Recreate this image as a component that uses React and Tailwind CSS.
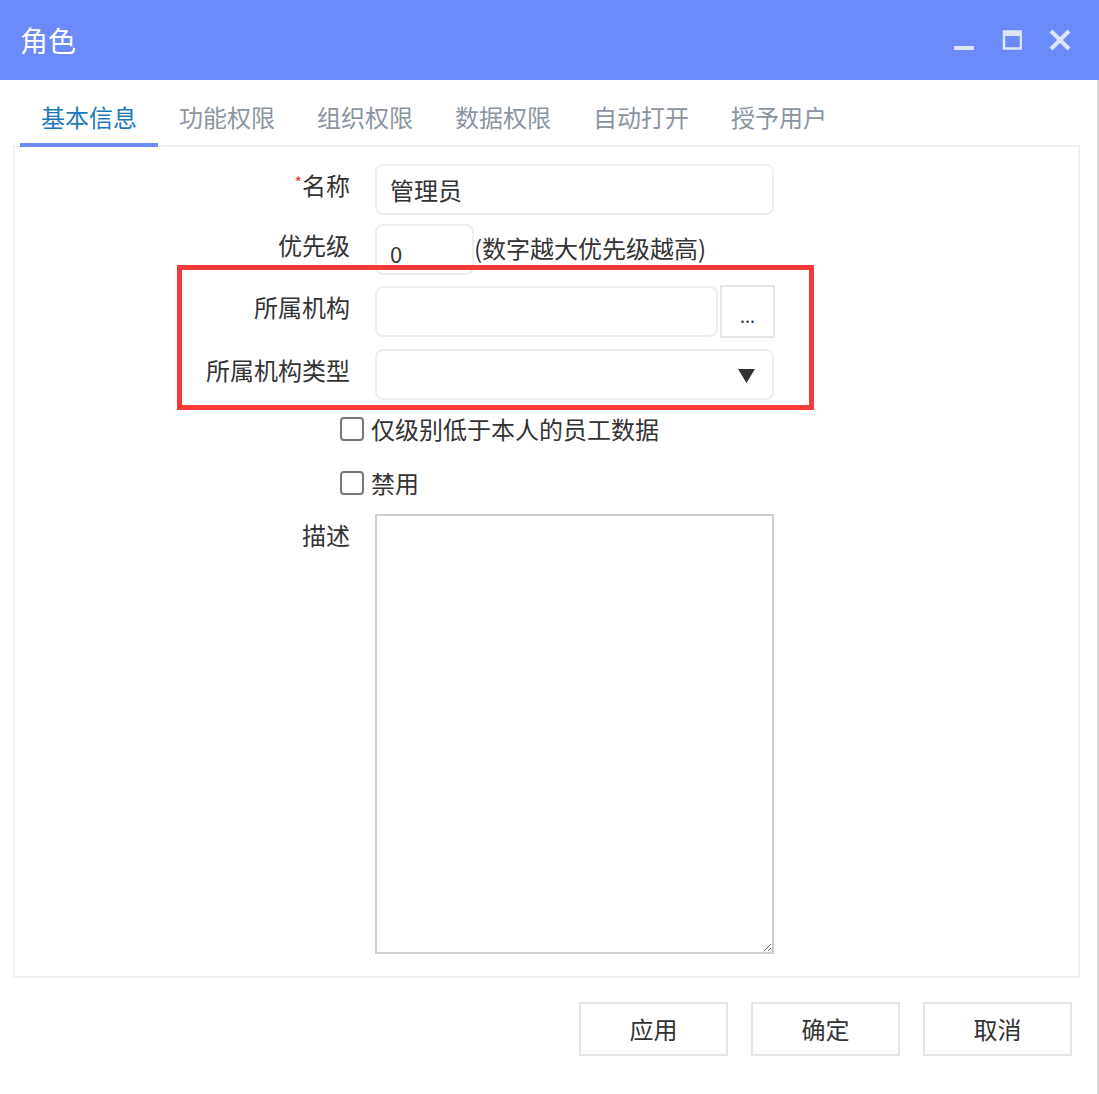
import { useState } from 'react'

const font = { fontFamily: '"Noto Sans CJK SC", "Noto Sans", sans-serif' }

const tabs = ['基本信息', '功能权限', '组织权限', '数据权限', '自动打开', '授予用户']

function Label({ children, required }) {
  return (
    <div className="w-[335px] shrink-0 pt-[5px] text-right text-[24px] leading-[32px] text-[#333]">
      {required && <span className="relative -top-[6px] text-[16px] text-[#e33]">*</span>}
      {children}
    </div>
  )
}

function Checkbox({ label }) {
  const [checked, setChecked] = useState(false)
  return (
    <label className="ml-[325px] flex items-center cursor-pointer">
      <span
        onClick={() => setChecked(!checked)}
        className="w-[24px] h-[24px] rounded-[4px] border-2 border-[#777] bg-white"
      />
      <span className="ml-[7px] text-[24px] leading-[32px] text-[#333]">{label}</span>
    </label>
  )
}

export default function App() {
  const [active, setActive] = useState(0)

  return (
    <div className="w-[1099px] h-[1094px] bg-white" style={font}>
      {/* title bar */}
      <div className="h-[80px] bg-[#6b8bfa] flex items-center pl-[20px] pr-[28px]">
        <div className="text-white text-[28px] leading-none">角色</div>
        <div className="ml-auto flex items-center text-[#dde5fd]">
          <svg width="22" height="22" viewBox="0 0 22 22" className="mr-[27px] mt-[6px]">
            <rect x="1" y="14" width="20" height="4" fill="currentColor" />
          </svg>
          <svg width="20" height="20" viewBox="0 0 20 20" className="mr-[27px]">
            <rect x="2" y="1.5" width="17" height="17" fill="none" stroke="currentColor" strokeWidth="2.5" />
            <rect x="2" y="1" width="17" height="5" fill="currentColor" />
          </svg>
          <svg width="22" height="22" viewBox="0 0 22 22">
            <path d="M2 2 L20 20 M20 2 L2 20" stroke="currentColor" strokeWidth="4" />
          </svg>
        </div>
      </div>

      <div className="h-[1014px] border-r-2 border-[#d9d9d9] relative">
        {/* tabs */}
        <div className="h-[67px] flex items-end pl-[20px]">
          {tabs.map((t, i) => (
            <div
              key={t}
              onClick={() => setActive(i)}
              className={
                'px-[21px] pb-[10px] text-[24px] leading-[32px] cursor-pointer border-b-4 ' +
                (i === active ? 'text-[#1b78bb] border-[#6b8bfa]' : 'text-[#8b95a1] border-transparent')
              }
            >
              {t}
            </div>
          ))}
        </div>

        {/* panel */}
        <div className="ml-[13px] mr-[17px] -mt-[2px] border-2 border-[#edf1f6] h-[833px] pt-[17px] flex flex-col">
          <div className="flex">
            <Label required>名称</Label>
            <input
              defaultValue="管理员"
              className="ml-[25px] w-[399px] h-[51px] rounded-[8px] border-2 border-[#eceef1] px-[13px] text-[24px] text-[#333] outline-none"
            />
          </div>

          <div className="flex mt-[9px]">
            <Label>优先级</Label>
            <input
              defaultValue="0"
              className="ml-[25px] w-[99px] h-[51px] rounded-[8px] border-2 border-[#eceef1] px-[13px] pt-[6px] text-[22px] text-[#333] outline-none"
            />
            <div className="pt-[8px] text-[24px] leading-[32px] text-[#333]">(数字越大优先级越高)</div>
          </div>

          <div className="flex mt-[11px]">
            <Label>所属机构</Label>
            <input className="ml-[25px] w-[343px] h-[51px] rounded-[8px] border-2 border-[#eceef1] px-[13px] text-[24px] outline-none" />
            <div className="ml-[2px] -mt-[1px] w-[55px] h-[53px] border-2 border-[#e4e6e8] flex items-center justify-center text-[#2a3a5a] text-[18px] leading-none pt-[6px]">
              ...
            </div>
          </div>

          <div className="flex mt-[11px]">
            <Label>所属机构类型</Label>
            <div className="ml-[25px] w-[399px] h-[51px] rounded-[8px] border-2 border-[#eceef1] flex items-center justify-end pr-[17px]">
              <svg width="17" height="14" viewBox="0 0 17 14" className="mt-[2px]">
                <polygon points="0,0 17,0 8.5,14" fill="#333" />
              </svg>
            </div>
          </div>

          <div className="mt-[13px]">
            <Checkbox label="仅级别低于本人的员工数据" />
          </div>
          <div className="mt-[22px]">
            <Checkbox label="禁用" />
          </div>

          <div className="flex mt-[15px]">
            <Label>描述</Label>
            <textarea className="ml-[25px] w-[399px] h-[440px] border-2 border-[#cfcfcf] outline-none p-2 text-[22px]" />
          </div>
        </div>

        {/* buttons */}
        <div className="flex justify-end gap-[23px] pr-[25px] mt-[24px]">
          {['应用', '确定', '取消'].map((b) => (
            <button
              key={b}
              className="w-[149px] h-[54px] border-2 border-[#e5e5e5] bg-white text-[24px] text-[#333]"
            >
              {b}
            </button>
          ))}
        </div>

        {/* red annotation box */}
        <div className="absolute left-[177px] top-[185px] w-[637px] h-[145px] border-[5px] border-[#f53a3a] pointer-events-none" />
      </div>
    </div>
  )
}
